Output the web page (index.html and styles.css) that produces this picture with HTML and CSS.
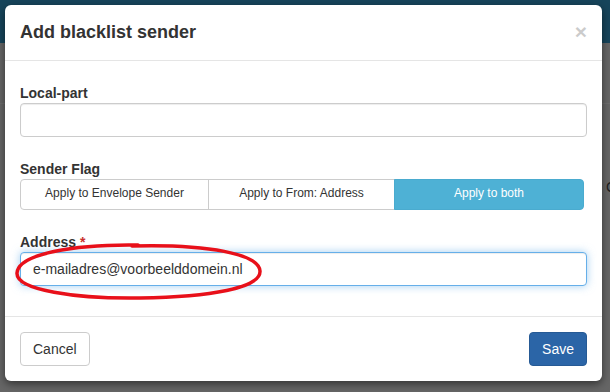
FILE: index.html
```html
<html>
  <head>
    <link rel="stylesheet" href="styles.css">
    <title>Blacklist</title>
  </head>
  <body>
    <div class="page">
      <div class="topbar"></div>
      <div class="page-main">
        <div class="page-row"></div>
        <div class="page-cols">
          <p class="peek-left">Rej<br>Ne<br>Per</p>
          <p class="peek-right">C</p>
        </div>
      </div>
    </div>

    <div class="modal">
      <div class="modal-header">
        <button class="close" type="button">&times;</button>
        <h4 class="modal-title">Add blacklist sender</h4>
      </div>

      <form class="modal-body">
        <div class="form-group">
          <label for="local-part">Local-part</label>
          <input id="local-part" class="form-control" type="text">
        </div>

        <div class="form-group">
          <label>Sender Flag</label>
          <div class="btn-group">
            <button type="button" class="btn btn-sm">Apply to Envelope Sender</button>
            <button type="button" class="btn btn-sm">Apply to From: Address</button>
            <button type="button" class="btn btn-sm active">Apply to both</button>
          </div>
        </div>

        <div class="form-group last">
          <label for="address">Address <span class="required">*</span></label>
          <input id="address" class="form-control focus" type="text" value="e-mailadres@voorbeelddomein.nl">
          <svg class="scribble" width="252" height="62" viewBox="0 0 252 62">
            <path d="M124 4 C 60 3, 4 13, 3 32 C 2 49, 62 58, 126 57 C 196 56, 247 47, 246 30 C 245 13, 194 3, 118 5"
                  fill="none" stroke="#e8101a" stroke-width="3.5" stroke-linecap="round"/>
          </svg>
        </div>
      </form>

      <div class="modal-footer">
        <button type="button" class="btn">Cancel</button>
        <button type="button" class="btn btn-primary">Save</button>
      </div>
    </div>
  </body>
</html>
```

FILE: styles.css
```css
body {
  margin: 0;
  background-color: #666;
  font-family: "Liberation Sans", Arial, sans-serif;
  font-size: 14px;
  line-height: 1.42857;
  color: #333;
  overflow: hidden;
}

/* page behind the backdrop */
.page {
  height: 392px;
}
.topbar {
  height: 43px;
  background-color: #17455b;
}
.page-row {
  height: 60px;
  border-bottom: 1px solid #6e6e6e;
}
.page-cols {
  display: flex;
  justify-content: space-between;
  padding-top: 56px;
}
.peek-left {
  margin: 0 0 0 -22px;
  color: #1e1e1e;
  line-height: 20px;
}
.peek-right {
  margin: 18px -6px 0 0;
  color: #1e1e1e;
}

/* modal */
.modal {
  position: absolute;
  top: 5px;
  left: 5px;
  width: 597px;
  background-color: #fff;
  border-radius: 6px;
  box-shadow: 0 3px 9px rgba(0, 0, 0, 0.5);
}

.modal-header {
  padding: 15px;
  border-bottom: 1px solid #e5e5e5;
}
.modal-title {
  margin: 0;
  font-size: 18px;
  font-weight: bold;
  line-height: 25px;
  color: #333;
}
.close {
  float: right;
  margin-top: 1px;
  padding: 0;
  border: 0;
  background: transparent;
  font-family: "Liberation Sans", Arial, sans-serif;
  font-size: 21px;
  font-weight: bold;
  line-height: 1;
  color: #000;
  opacity: 0.2;
}

.modal-body {
  margin: 0;
  padding: 22px 15px 30px;
}
.form-group {
  position: relative;
  margin-bottom: 22px;
}
.form-group.last {
  margin-bottom: 0;
}
label {
  display: block;
  font-weight: bold;
  line-height: 20px;
}
.required {
  color: #c9302c;
}

.form-control {
  display: block;
  box-sizing: border-box;
  width: 100%;
  height: 34px;
  padding: 6px 12px;
  font-family: "Liberation Sans", Arial, sans-serif;
  font-size: 14px;
  color: #333;
  background-color: #fff;
  border: 1px solid #ccc;
  border-radius: 4px;
  box-shadow: inset 0 1px 1px rgba(0, 0, 0, 0.075);
  outline: none;
}
.form-control.focus {
  border-color: #66afe9;
  box-shadow: inset 0 1px 1px rgba(0, 0, 0, 0.075), 0 0 8px rgba(102, 175, 233, 0.6);
}

.scribble {
  position: absolute;
  left: -6px;
  top: 9px;
  pointer-events: none;
}

.btn {
  display: inline-block;
  box-sizing: border-box;
  padding: 6px 12px;
  font-family: "Liberation Sans", Arial, sans-serif;
  font-size: 14px;
  line-height: 20px;
  color: #333;
  background-color: #fff;
  border: 1px solid #ccc;
  border-radius: 4px;
}
.btn-primary {
  color: #fff;
  background-color: #2b65a7;
  border-color: #265a95;
}

.btn-group {
  display: grid;
  grid-template-columns: 189px 186px 189px;
}
.btn-sm {
  padding: 4px 10px 6px;
  font-size: 12px;
  line-height: 19px;
  border-radius: 0;
}
.btn-group .btn + .btn {
  margin-left: -1px;
}
.btn-group .btn:first-child {
  border-radius: 4px 0 0 4px;
}
.btn-group .btn:last-child {
  border-radius: 0 4px 4px 0;
}
.btn-sm.active {
  color: #fff;
  background-color: #4eb1d5;
  border-color: #4aabcf;
}

.modal-footer {
  display: flex;
  justify-content: space-between;
  padding: 15px;
  border-top: 1px solid #e5e5e5;
}
```
